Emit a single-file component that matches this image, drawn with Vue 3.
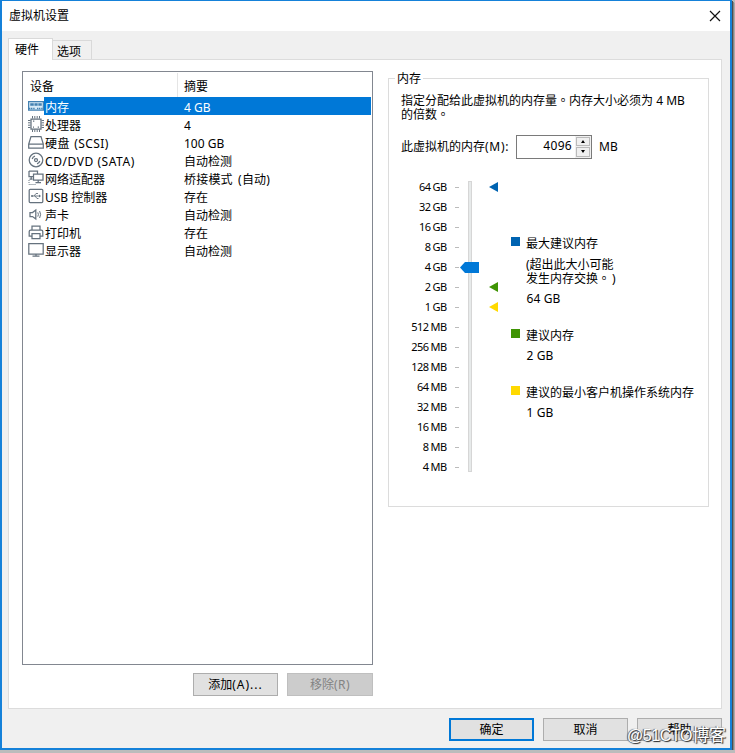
<script setup>
const devices = [
  { icon: 'ram', name: '内存', summary: '4 GB', selected: true },
  { icon: 'cpu', name: '处理器', summary: '4' },
  { icon: 'disk', name: '硬盘 (SCSI)', summary: '100 GB', spaced: true },
  { icon: 'cd', name: 'CD/DVD (SATA)', summary: '自动检测', wide: true },
  { icon: 'net', name: '网络适配器', summary: '桥接模式 (自动)', spacedSummary: true },
  { icon: 'usb', name: 'USB 控制器', summary: '存在' },
  { icon: 'sound', name: '声卡', summary: '自动检测' },
  { icon: 'printer', name: '打印机', summary: '存在' },
  { icon: 'display', name: '显示器', summary: '自动检测' },
]
const sizes = ['64 GB', '32 GB', '16 GB', '8 GB', '4 GB', '2 GB', '1 GB', '512 MB', '256 MB', '128 MB', '64 MB', '32 MB', '16 MB', '8 MB', '4 MB']
const markers = { '64 GB': 'blue', '2 GB': 'green', '1 GB': 'yellow' }
</script>

<template>
  <div class="window">
    <header class="titlebar">
      <span>虚拟机设置</span>
      <svg class="close" width="12" height="12" viewBox="0 0 12 12"><path d="M1 1L11 11M11 1L1 11" fill="none" stroke="#111" stroke-width="1.2" /></svg>
    </header>
    <nav class="tabs">
      <div class="tab active">硬件</div>
      <div class="tab">选项</div>
    </nav>
    <main class="panel">
      <section class="left">
        <div class="list">
          <div class="head"><span class="c1">设备</span><span class="c2">摘要</span></div>
          <div v-for="d in devices" :key="d.name" class="row" :class="{ selected: d.selected }">
            <svg class="icon" width="16" height="16" viewBox="0 0 16 16" fill="none" stroke="#65727e" stroke-width="1.25">
              <g v-if="d.icon === 'ram'" stroke="#4481b1"><path d="M.6 3.5H15.4V12H.6Z" fill="#d9ebf7" /><path d="M2.5 5.5H5.5V7.5H2.5ZM6.7 5.5H9.4V7.5H6.7ZM10.6 5.5H13.5V7.5H10.6Z" fill="#4481b1" stroke-width=".5" /><path d="M1 10.5H7M9 10.5H15" stroke-width="1.5" stroke-dasharray="1.2 .6" /></g>
              <g v-else-if="d.icon === 'cpu'"><path d="M3 3H13V13H3Z" /><path d="M4.5 0V2.5M6.8 0V2.5M9.2 0V2.5M11.5 0V2.5M4.5 13.5V16M6.8 13.5V16M9.2 13.5V16M11.5 13.5V16M0 4.5H2.5M0 6.8H2.5M0 9.2H2.5M0 11.5H2.5M13.5 4.5H16M13.5 6.8H16M13.5 9.2H16M13.5 11.5H16" stroke-width="1" /><path d="M5 5H6.3M9.7 11H11M5 11H6" /></g>
              <g v-else-if="d.icon === 'disk'"><path d="M3 2.5H13L15.3 10V14H.7V10ZM.7 10H15.3" /></g>
              <g v-else-if="d.icon === 'cd'"><circle cx="8" cy="8" r="6.8" /><circle cx="8" cy="8" r="1.5" /><path d="M4.2 7A4 4 0 0 1 7 4.2M11.8 9A4 4 0 0 1 9 11.8" /></g>
              <g v-else-if="d.icon === 'net'"><path d="M1 1H9.5V4M1 1V6.5H5M3.2 6.5V9M1.5 9H4.5M5.5 4H15V10H5.5ZM10.2 10V12.5M7.5 12.5H13" /><path d="M1 10V14.5H8.5" stroke-dasharray="1 1" stroke-width="1" /></g>
              <g v-else-if="d.icon === 'usb'"><rect x="1.2" y="1.3" width="13.6" height="13.2" rx="1" /><path d="M4 8H12M6 8L8 5.5H10M7 8L9 10.5H10.5" stroke-width=".9" /><circle cx="4" cy="8" r="1" fill="#65727e" stroke="none" /><path d="M11 6.5L13 8L11 9.5Z" fill="#65727e" stroke="none" /></g>
              <g v-else-if="d.icon === 'sound'"><path d="M2 6.5H4.5L7.8 4V13L4.5 10.5H2Z" /><path d="M9.8 6.4Q11 8.5 9.8 10.6M11.6 5Q13.6 8.5 11.6 12" stroke-width="1" /></g>
              <g v-else-if="d.icon === 'printer'"><path d="M4 6V2H12V6M4 12H1.2V7.5Q1.2 6 2.7 6H13.3Q14.8 6 14.8 7.5V12H12M4 9.5H12V14.5H4Z" /></g>
              <g v-else><path d="M.8 1.7H15.2V12H.8Z" /><path d="M4.5 14.1H11.5M8 12V14" /></g>
            </svg>
            <div class="cells"><span class="name" :class="{ wide: d.wide, spaced: d.spaced }">{{ d.name }}</span><span class="c2" :class="{ loose: d.spacedSummary }">{{ d.summary }}</span></div>
          </div>
        </div>
        <div class="actions">
          <button class="btn add">添加<span>(A)...</span></button>
          <button class="btn disabled">移除<span>(R)</span></button>
        </div>
      </section>
      <section class="group">
        <h2><span>内存</span></h2>
        <p class="intro">指定分配给此虚拟机的内存量<u>。</u>内存大小必须为 <i>4 MB</i><br>的倍数<u>。</u></p>
        <div class="memory">
          <label>此虚拟机的内存<span>(M):</span></label>
          <div class="spin"><span class="value">4096</span>
            <span class="arrows"><span><i class="up"></i></span><span><i class="down"></i></span></span>
          </div>
          <span>MB</span>
        </div>
        <div class="body">
          <div class="scale">
            <ul>
              <li v-for="s in sizes" :key="s"><span>{{ s }}</span><i></i></li>
            </ul>
            <div class="track">
              <svg class="thumb" width="19" height="11" viewBox="0 0 19 11"><path d="M0 5.5L5 0H19V11H5Z" fill="#0078d7" /></svg>
            </div>
            <ul class="marks">
              <li v-for="s in sizes" :key="s"><b v-if="markers[s]" :class="markers[s]"></b></li>
            </ul>
          </div>
          <div class="legend">
            <div class="item max"><b class="blue"></b><div><p>最大建议内存</p><p class="note">(超出此大小可能<br>发生内存交换<u>。</u><span class="paren">)</span></p><p class="amount">64 GB</p></div></div>
            <div class="item rec"><b class="green"></b><div><p>建议内存</p><p class="amount">2 GB</p></div></div>
            <div class="item min"><b class="yellow"></b><div><p>建议的最小客户机操作系统内存</p><p class="amount">1 GB</p></div></div>
          </div>
        </div>
      </section>
    </main>
    <footer>
      <button class="btn primary">确定</button>
      <button class="btn">取消</button>
      <button class="btn">帮助</button>
    </footer>
    <div class="watermark"><span>@51CTO</span>博客</div>
  </div>
</template>

<style>
body { background: #bcbcbc; overflow: hidden; }
</style>

<style scoped>
* { box-sizing: border-box; margin: 0; padding: 0; }
.window { position: relative; width: 732px; height: 750px; border: 2px solid #1581d9; border-top-width: 1px; background: #f0f0f0; box-shadow: 1px 1px 0 #4c4c4c, 2px 2px 0 #858585, 3px 3px 0 #aaa; font: 12px/18px "Noto Sans", "Noto Sans CJK SC", sans-serif; color: #000; white-space: nowrap; }
i { font-style: normal; }
u { text-decoration: none; font-family: "Noto Sans CJK TC", sans-serif; line-height: 0; }
.titlebar { height: 30px; padding: 0 9px 0 7px; background: #fff; display: flex; align-items: center; justify-content: space-between; }
.close { margin-top: -1px; }
.tabs { height: 28px; padding: 7px 0 0 6px; display: flex; align-items: flex-end; }
.tab { width: 39px; height: 19px; padding-left: 4px; border: 1px solid #d9d9d9; border-left: 0; border-bottom: 0; line-height: 21px; }
.tab.active { width: 45px; height: 22px; margin-bottom: -1px; padding-left: 6px; border-left: 1px solid #d9d9d9; background: #fff; line-height: 21px; z-index: 1; }
.panel { width: 714px; height: 650px; margin-left: 6px; border: 1px solid #dcdcdc; background: #fff; display: flex; align-items: flex-start; }
.left { margin: 11px 0 0 13px; width: 351px; }
.list { height: 594px; border: 1px solid #828790; padding: 1px; }
.head { height: 24px; display: flex; line-height: 27px; }
.head .c1 { width: 154px; padding-left: 6px; border-right: 1px solid #e5e5e5; }
.head .c2 { padding-left: 6px; }
.row { height: 18.05px; display: flex; padding-left: 4px; align-items: center; }
.icon { flex: none; }
.cells { width: 327px; height: 18px; display: flex; padding-left: 1px; line-height: 21px; }
.name { width: 139px; }
.wide { letter-spacing: .55px; }
.spaced { letter-spacing: .4px; word-spacing: 1px; }
.loose { word-spacing: 2px; letter-spacing: .2px; }
.selected .cells { background: #0078d7; color: #fff; }
.actions { display: flex; justify-content: flex-end; gap: 9px; margin-top: 8px; }
.btn { width: 85px; height: 23px; border: 1px solid #adadad; background: #e1e1e1; font: inherit; line-height: 22px; color: #000; }
.btn span { letter-spacing: .4px; }
.add span { letter-spacing: 1px; }
.disabled { width: 86px; background: #ccc; border-color: #bfbfbf; color: #838383; }
.primary { border: 2px solid #0078d7; line-height: 20px; }
.group { width: 321px; height: 429px; margin: 18px 0 0 15px; border: 1px solid #dcdcdc; }
h2 { font: inherit; height: 18px; margin: -9px 0 0 6px; }
h2 span { background: #fff; padding: 0 2px; }
.intro { margin: 6px 0 0 12px; line-height: 14px; }
.memory { margin: 12px 0 0 12px; display: flex; align-items: center; height: 25px; }
label { width: 115px; }
label span { letter-spacing: .7px; }
.spin { width: 76px; height: 24px; border: 1px solid #7a7a7a; display: flex; margin-right: 7px; background: #fff; }
.value { flex: 1; text-align: right; padding-right: 3px; letter-spacing: .3px; line-height: 20px; }
.arrows { width: 16px; background: #f0f0f0; display: flex; flex-direction: column; gap: 1px; padding: 1px 1px; }
.arrows span { flex: 1; border: 1px solid #bbb; display: flex; align-items: center; justify-content: center; }
.up, .down { border: 2.5px solid transparent; border-top: 0; border-bottom: 3px solid #000; }
.down { border-bottom: 0; border-top: 3px solid #000; }
.body { display: flex; margin: 18px 0 0 12px; }
.scale { display: flex; width: 109px; }
ul { list-style: none; width: 58px; }
li { height: 19.97px; display: flex; align-items: center; justify-content: space-between; font-size: 11px; letter-spacing: -.5px; word-spacing: -.4px; }
ul:first-child { padding-top: .5px; }
li span { width: 45.6px; text-align: right; }
li i { width: 4px; height: 1px; background: #bbb; }
.track { position: relative; width: 4px; height: 291px; margin: 4px 0 0 9px; background: #e7eaea; border: 1px solid #d6d6d6; }
.thumb { position: absolute; left: -9px; top: 80px; }
.marks { width: 12px; margin-left: 17px; padding-top: .3px; }
.marks b { border: 5px solid transparent; border-right: 9px solid; border-left: 0; background: none; }
.blue { background: #0063b1; }
.green { background: #3f9404; }
.yellow { background: #ffd900; }
.marks .blue { border-right-color: #0063b1; }
.marks .green { border-right-color: #3f9404; }
.marks .yellow { border-right-color: #ffd900; }
.legend { padding-top: 58px; }
.item { display: flex; gap: 6px; }
.item > b { width: 9px; height: 9px; margin: 2px 0 0 1px; flex: none; }
.item.max { height: 92px; }
.item.rec { height: 57px; }
.note { line-height: 14px; margin: 5px 0 3px; }
.paren { padding-left: 2px; }
.max .amount { margin-top: 4px; }
.amount { margin-top: 2px; padding-left: .5px; letter-spacing: .1px; }
footer { display: flex; justify-content: flex-end; gap: 9px; margin: 9px 8px 0 0; }
.watermark { position: absolute; left: 625px; top: 721px; font-size: 17px; line-height: 26px; color: #fff; text-shadow: 1px 1px 1px #222, -1px 0 1px #555; }
.watermark span { font: 16px "Liberation Sans", sans-serif; letter-spacing: -.4px; }
</style>
